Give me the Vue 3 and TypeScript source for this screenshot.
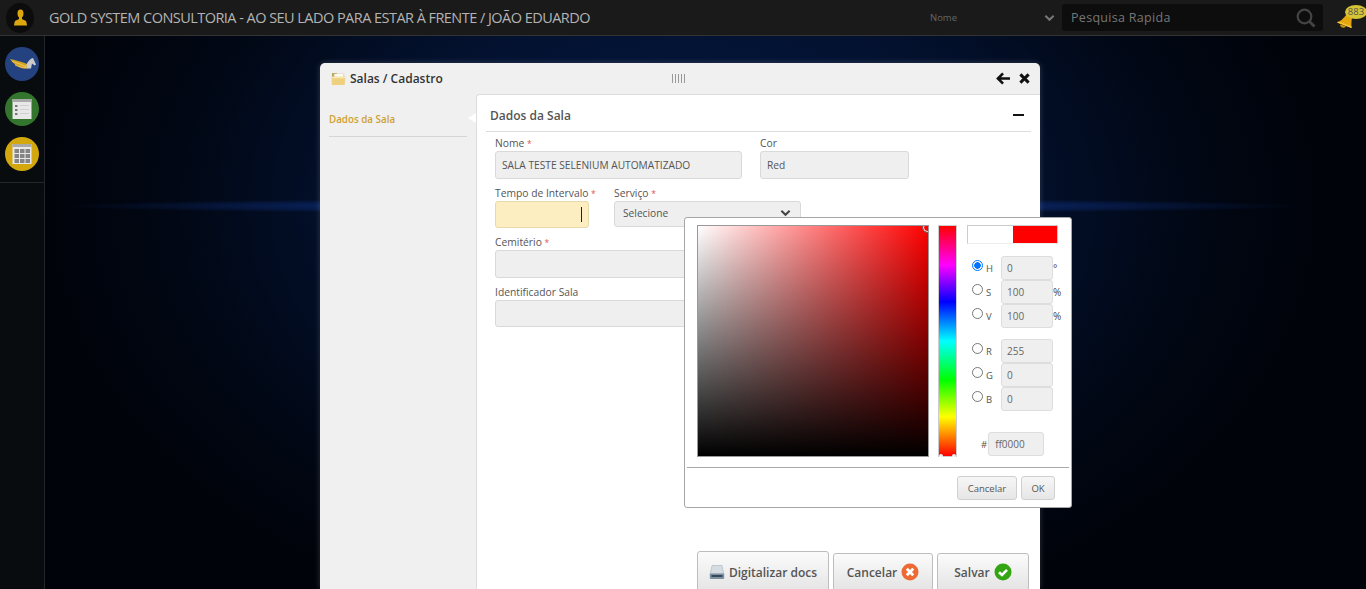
<script setup lang="ts">
interface Field {
  key: string
  value: string
  unit?: string
  checked?: boolean
}

const hsv: Field[] = [
  { key: 'H', value: '0', unit: '°', checked: true },
  { key: 'S', value: '100', unit: '%' },
  { key: 'V', value: '100', unit: '%' },
]

const rgb: Field[] = [
  { key: 'R', value: '255' },
  { key: 'G', value: '0' },
  { key: 'B', value: '0' },
]
</script>

<template>
  <div class="page">
    <header class="topbar">
      <div class="avatar">
        <svg viewBox="0 0 16 18" width="15" height="17">
          <path d="M8 .5C5.800.5 4.800 2.300 4.800 4.600c0 1.900.7 3.400 1.600 4.400v1.600C4.600 11.700 2.400 12 1.800 13.500L1 17.500h14l-.8-4c-.6-1.500-2.800-1.800-4.600-2.900V9c.9-1 1.600-2.500 1.600-4.400C11.200 2.300 10.200.5 8 .5z" fill="#dba70e" />
        </svg>
      </div>
      <div class="brand">GOLD SYSTEM CONSULTORIA - AO SEU LADO PARA ESTAR À FRENTE / JOÃO EDUARDO</div>
      <div class="filter">
        <span>Nome</span>
        <svg viewBox="0 0 12 8" width="11" height="8"><path d="M1.500 1.500 6 6l4.500-4.500" fill="none" stroke="#777" stroke-width="2.200" /></svg>
      </div>
      <div class="search">
        <span>Pesquisa Rapida</span>
        <svg viewBox="0 0 20 20" width="20" height="20"><circle cx="8.500" cy="8.500" r="6.800" fill="none" stroke="#444" stroke-width="2.200" /><path d="M13.500 13.500 18.500 18.500" stroke="#444" stroke-width="2.800" /></svg>
      </div>
      <div class="bell">
        <svg viewBox="0 0 20 20" width="20" height="20">
          <path d="M2 13.500C7 12 10 7 13 4c2-1 4 0 4 2 0 4-1 8-.5 13z" fill="#e4a60c" />
          <path d="M5 15.500c.2 3.500 4.800 4.500 6 1.500z" fill="#c8920a" />
          <path d="M2 13.500 16.500 19l.2-1.600L3.500 12.500z" fill="#f5c83a" />
        </svg>
        <span class="bell-count">883</span>
      </div>
    </header>

    <div class="workspace">
      <nav class="rail">
        <div class="rail-icons">
          <div class="rail-btn blue">
            <svg viewBox="0 0 34 34" width="34" height="34">
              <path d="M5 12c6 1 12 3 17 5l.5 4.500c-7 1-13-3.500-17.500-9.500z" fill="#d6a520" />
              <path d="M7 14.500c4 1 9 3 14 5M10 18c3 1.500 7 2.500 11 2.500" fill="none" stroke="#f0cf6a" stroke-width=".8" />
              <path d="M21.500 18c1-3.500 4-6.500 6.500-7l3 6.500-1.500 1-2.500-2-1 5-4.500 0z" fill="#cbcbcb" />
            </svg>
          </div>
          <div class="rail-btn green">
            <svg viewBox="0 0 34 34" width="34" height="34">
              <rect x="7.500" y="7" width="19" height="20" fill="#e8e8e8" />
              <rect x="7.500" y="7" width="19" height="3" fill="#a9a9a9" />
              <path d="M10 13h2.500v2H10zM10 17h2.500v2H10zM10 21h2.500v2H10z" fill="#777" />
              <path d="M15 13.500h9M15 17.500h9M15 21.500h9" stroke="#cfcfcf" />
            </svg>
          </div>
          <div class="rail-btn gold">
            <svg viewBox="0 0 34 34" width="34" height="34">
              <rect x="7.500" y="7" width="19" height="20" fill="#e8e8e8" />
              <rect x="7.500" y="7" width="19" height="3" fill="#a9a9a9" />
              <path d="M9.500 12h4.500v4h-4.500zM15 12h4.500v4H15zM20.500 12H25v4h-4.500zM9.500 17h4.500v4h-4.500zM15 17h4.500v4H15zM20.500 17H25v4h-4.500zM9.500 22h4.500v4h-4.500zM15 22h4.500v4H15zM20.500 22H25v4h-4.500z" fill="#858585" />
            </svg>
          </div>
        </div>
      </nav>

      <main class="stage">
        <section class="modal">
          <div class="modal-head">
            <div class="modal-title">
              <svg viewBox="0 0 16 14" width="15" height="14">
                <path d="M1 .5h5l1 1h7v4H1z" fill="#bda964" />
                <path d="M3.500 1.500h10v3.500h-10z" fill="#fbfaf3" />
                <path d="M.5 4.500h15L14.500 13.500H1z" fill="#eed07f" />
                <path d="M.5 4.500h15l-.2 1.600H.6z" fill="#f9e8b4" />
              </svg>
              <span>Salas / Cadastro</span>
            </div>
            <div class="barcode"></div>
            <div class="modal-actions">
              <svg viewBox="0 0 16 14" width="15" height="13"><path d="M7.500 1.500 2 7l5.500 5.500M2.500 7H15" fill="none" stroke="#111" stroke-width="2.800" /></svg>
              <svg viewBox="0 0 12 12" width="11" height="11"><path d="M1.500 1.500l9 9M10.500 1.500l-9 9" stroke="#111" stroke-width="3.200" /></svg>
            </div>
          </div>

          <div class="modal-body">
            <aside class="tabs">
              <div class="tab">Dados da Sala</div>
            </aside>
            <div class="panel">
              <span class="panel-notch"></span>
              <div class="panel-head">
                <span>Dados da Sala</span>
                <i class="minus"></i>
              </div>

              <div class="form">
                <div class="row">
                  <label class="field w-nome">
                    <span class="lbl">Nome <b>*</b></span>
                    <span class="input tall">SALA TESTE SELENIUM AUTOMATIZADO</span>
                  </label>
                  <label class="field w-cor">
                    <span class="lbl">Cor</span>
                    <span class="input tall">Red</span>
                  </label>
                </div>
                <div class="row row-time">
                  <label class="field w-tempo">
                    <span class="lbl">Tempo de Intervalo <b>*</b></span>
                    <span class="input focus"><i class="caret"></i></span>
                  </label>
                  <label class="field w-servico">
                    <span class="lbl">Serviço <b>*</b></span>
                    <span class="input select">
                      Selecione
                      <svg viewBox="0 0 12 8" width="11" height="8"><path d="M1.500 1.500 6 6l4.500-4.500" fill="none" stroke="#444" stroke-width="2.200" /></svg>
                    </span>
                  </label>
                </div>
                <label class="field wide">
                  <span class="lbl">Cemitério <b>*</b></span>
                  <span class="input tall"></span>
                </label>
                <label class="field wide">
                  <span class="lbl">Identificador Sala</span>
                  <span class="input"></span>
                </label>
              </div>

              <div class="footer">
                <button class="btn big">
                  <svg viewBox="0 0 16 16" width="16" height="16">
                    <path d="M3 1.500h10l1.800 8.500H1.200z" fill="#d5dce2" stroke="#aab4bd" stroke-width=".6" />
                    <rect x=".8" y="9.500" width="14.400" height="5.500" rx="1" fill="#7f90a1" />
                    <rect x="2.500" y="11.200" width="11" height="1.600" fill="#24364a" />
                  </svg>
                  Digitalizar docs
                </button>
                <button class="btn">
                  Cancelar
                  <svg viewBox="0 0 18 18" width="18" height="18">
                    <circle cx="9" cy="9" r="8.500" fill="#ee6a35" />
                    <path d="M5.800 5.800l6.400 6.400M12.200 5.800l-6.400 6.400" stroke="#fff" stroke-width="2.800" />
                  </svg>
                </button>
                <button class="btn">
                  Salvar
                  <svg viewBox="0 0 18 18" width="18" height="18">
                    <circle cx="9" cy="9" r="8.500" fill="#34a512" />
                    <path d="M5 9.200l3 2.800 5-5.200" fill="none" stroke="#fff" stroke-width="2.600" />
                  </svg>
                </button>
              </div>
            </div>
          </div>
        </section>

        <!-- seletor de cor aberto por cima do formulario -->
        <div class="picker">
          <div class="picker-main">
            <div class="sv-box"><i class="sv-handle"></i></div>
            <div class="hue"><i></i><i></i></div>
            <div class="picker-side">
              <div class="swatch"><i></i><i></i></div>
              <div class="group">
                <div v-for="f in hsv" :key="f.key" class="line">
                  <span class="radio" :class="{ on: f.checked }"></span>
                  <span class="key">{{ f.key }}</span>
                  <span class="num">{{ f.value }}</span>
                  <span class="unit">{{ f.unit }}</span>
                </div>
              </div>
              <div class="group">
                <div v-for="f in rgb" :key="f.key" class="line">
                  <span class="radio"></span>
                  <span class="key">{{ f.key }}</span>
                  <span class="num">{{ f.value }}</span>
                </div>
              </div>
              <div class="hex">
                <span>#</span>
                <span class="hex-val">ff0000</span>
              </div>
            </div>
          </div>
          <div class="picker-foot">
            <button class="pbtn">Cancelar</button>
            <button class="pbtn">OK</button>
          </div>
        </div>
      </main>
    </div>
  </div>
</template>

<style>
html, body {
  margin: 0;
  background: #000;
}
</style>

<style scoped>
.page {
  width: 1366px;
  height: 589px;
  overflow: hidden;
  display: flex;
  flex-direction: column;
  font-family: "Open Sans", "Noto Sans", sans-serif;
  background:
    radial-gradient(ellipse 620px 8px at 683px 206px, #0c2a70 0%, rgba(12, 42, 112, 0.75) 50%, transparent 100%),
    radial-gradient(ellipse 640px 440px at 683px 206px, #051a45 0%, #03112e 50%, #010714 80%, #00030a 100%);
}

.topbar {
  height: 35px;
  flex: none;
  display: flex;
  align-items: center;
  background: #1a1a1a;
  border-bottom: 1px solid #333;
}

.avatar {
  width: 28px;
  height: 30px;
  margin-left: 6px;
  border-radius: 50%;
  background: #0c0c0c;
  display: flex;
  align-items: center;
  justify-content: center;
}

.brand {
  margin-left: 15px;
  width: 881px;
  color: #b4b4b4;
  font-size: 14.500px;
  letter-spacing: -0.54px;
  white-space: nowrap;
}

.filter {
  width: 132px;
  display: flex;
  justify-content: space-between;
  align-items: center;
  color: #666;
  font-size: 9.500px;
  padding-right: 7px;
  box-sizing: border-box;
}

.search {
  width: 261px;
  height: 27px;
  border-radius: 3px;
  background: #0d0d0d;
  display: flex;
  align-items: center;
  justify-content: space-between;
  padding: 0 7px 0 9px;
  box-sizing: border-box;
  color: #777;
  font-size: 12.500px;
  letter-spacing: 0.3px;
}

.bell {
  position: relative;
  margin-left: 14px;
  width: 29px;
  height: 26px;
}

.bell svg {
  position: absolute;
  left: -2px;
  top: 4px;
}

.bell-count {
  position: absolute;
  left: 8px;
  top: 0;
  width: 22px;
  height: 14px;
  line-height: 14px;
  border-radius: 50%;
  background: #d6c434;
  color: #555;
  font-size: 9.500px;
  text-align: center;
}

.workspace {
  flex: 1;
  display: flex;
  min-height: 0;
}

.rail {
  width: 44px;
  flex: none;
  background: #090c0f;
  border-right: 1px solid #23262a;
}

.rail-icons {
  padding: 11px 0 11px 5px;
  display: flex;
  flex-direction: column;
  gap: 11px;
  border-bottom: 1px solid #23262a;
}

.rail-btn {
  width: 34px;
  height: 34px;
  border-radius: 50%;
}

.rail-btn.blue { background: #23427f; }
.rail-btn.green { background: #33752c; }
.rail-btn.gold { background: #d3a80f; }

.stage {
  position: relative;
  flex: 1;
  min-width: 0;
  padding: 27px 0 0 275px;
}

.modal {
  width: 720px;
  height: 526px;
  border-radius: 5px 5px 0 0;
  background: #f0f0f0;
  box-shadow: 0 0 6px rgba(255, 255, 255, 0.18);
  display: flex;
  flex-direction: column;
}

.modal-head {
  height: 31px;
  flex: none;
  display: flex;
  align-items: center;
  padding: 0 10px 0 11px;
}

.modal-title {
  width: 341px;
  display: flex;
  align-items: center;
  gap: 4px;
  color: #333;
  font-size: 12px;
  font-weight: 600;
}

.barcode {
  width: 15px;
  height: 9px;
  background: repeating-linear-gradient(90deg, #999 0 1px, transparent 1px 3px);
}

.modal-actions {
  margin-left: auto;
  display: flex;
  align-items: center;
  gap: 8px;
}

.modal-body {
  flex: 1;
  display: flex;
  min-height: 0;
}

.tabs {
  width: 156px;
  flex: none;
  padding: 19px 9px 0;
  box-sizing: border-box;
}

.tab {
  color: #cfa12f;
  font-size: 9.800px;
  font-weight: 600;
  padding-bottom: 10px;
  border-bottom: 1px solid #d6d6d6;
  width: 138px;
}

.panel {
  position: relative;
  flex: 1;
  display: flex;
  flex-direction: column;
  padding: 0 9px;
  background: #fff;
  border: 1px solid #ddd;
  border-bottom: 0;
  border-right: 0;
  border-radius: 4px 0 0 0;
}

.panel-notch {
  position: absolute;
  left: -9px;
  top: 18px;
  border-style: solid;
  border-width: 5px 8px 5px 0;
  border-color: transparent #fff transparent transparent;
}

.panel-head {
  height: 37px;
  flex: none;
  box-sizing: border-box;
  display: flex;
  align-items: center;
  justify-content: space-between;
  padding: 5px 7px 0 4px;
  border-bottom: 1px solid #ddd;
  color: #555;
  font-size: 12px;
  font-weight: 600;
}

.minus {
  width: 11px;
  height: 2px;
  background: #111;
  margin-top: -2px;
}

.form {
  display: flex;
  flex-direction: column;
  gap: 8px;
  padding: 5px 9px 0;
  flex: 1;
}

.row {
  display: flex;
  gap: 18px;
}

.row-time {
  gap: 25px;
}

.field {
  display: flex;
  flex-direction: column;
}

.w-nome { width: 247px; }
.w-cor { width: 149px; }
.w-tempo { width: 94px; }
.w-servico { width: 187px; }
.wide { width: 517px; }

.lbl {
  height: 13px;
  line-height: 12px;
  margin-bottom: 1px;
  color: #555;
  font-size: 10.300px;
  white-space: nowrap;
}

.lbl b {
  color: #d55;
  font-weight: 400;
  font-size: 8.500px;
}

.input {
  height: 27px;
  display: flex;
  align-items: center;
  padding: 0 6px;
  box-sizing: border-box;
  background: #efefef;
  border: 1px solid #d9d9d9;
  border-radius: 3px;
  color: #555;
  font-size: 10.200px;
}

.input.tall {
  height: 28px;
}

.focus {
  background: #fdeec2;
  border-color: #e8d9ad;
  justify-content: flex-end;
  padding-right: 6px;
}

.caret {
  width: 1px;
  height: 15px;
  background: #222;
}

.select {
  height: 26px;
  justify-content: space-between;
  padding: 0 9px 2px 8px;
}

.footer {
  flex: none;
  display: flex;
  justify-content: flex-end;
  align-items: flex-start;
  gap: 4px;
  padding-right: 2px;
  height: 38px;
}

.btn {
  height: 38px;
  width: 100px;
  margin-top: 2px;
  padding: 0;
  display: flex;
  align-items: center;
  justify-content: center;
  gap: 4px;
  border: 1px solid #bdbdbd;
  border-radius: 3px;
  background: linear-gradient(#fbfbfb, #e4e4e4);
  color: #555;
  font-family: inherit;
  font-size: 12px;
  font-weight: 600;
}

.btn:last-child {
  width: 92px;
}

.btn.big {
  width: 132px;
  height: 42px;
  margin-top: 0;
}

.picker {
  position: absolute;
  left: 639px;
  top: 181px;
  width: 388px;
  height: 291px;
  box-sizing: border-box;
  background: #fff;
  border: 1px solid #a6a6a6;
  border-radius: 3px;
  padding: 7px 2px 0;
  display: flex;
  flex-direction: column;
}

.picker-main {
  display: flex;
  padding-left: 10px;
  height: 242px;
  flex: none;
}

.sv-box {
  position: relative;
  flex: none;
  width: 230px;
  height: 230px;
  overflow: hidden;
  border: 1px solid #999;
  background:
    linear-gradient(transparent, #000),
    linear-gradient(90deg, #fff, #f00);
}

.sv-handle {
  position: absolute;
  right: -4px;
  top: -3px;
  width: 7px;
  height: 7px;
  border: 1px solid #fff;
  outline: 1px solid #666;
  border-radius: 50%;
}

.hue {
  position: relative;
  flex: none;
  width: 17px;
  height: 230px;
  margin-left: 9px;
  border: 1px solid #ccc;
  background: linear-gradient(#f00, #f0f 17%, #00f 33%, #0ff 50%, #0f0 67%, #ff0 83%, #f00);
}

.hue i {
  position: absolute;
  bottom: -1px;
  left: 0;
  width: 4px;
  height: 3px;
  background: #eee;
  border-radius: 2px 2px 0 0;
}

.hue i + i {
  left: auto;
  right: 0;
}

.picker-side {
  width: 100px;
  flex: none;
  margin-left: 10px;
}

.swatch {
  display: flex;
  width: 89px;
  height: 17px;
  border: 1px solid #ccc;
  border-bottom-color: #eee;
}

.swatch i {
  flex: 1;
}

.swatch i + i {
  background: #f00;
}

.group {
  margin-top: 12px;
  padding-left: 5px;
}

.group + .group {
  margin-top: 11px;
}

.line {
  height: 24px;
  display: flex;
  align-items: center;
  color: #555;
  font-size: 9.500px;
}

.radio {
  flex: none;
  width: 9px;
  height: 9px;
  border: 1px solid #777;
  border-radius: 50%;
  margin-top: -6px;
  margin-right: 3px;
  background: #fff;
}

.radio.on {
  border-color: #0075ff;
  background: radial-gradient(circle, #0075ff 0 3px, #fff 3.500px);
}

.key {
  flex: none;
  width: 15px;
}

.num {
  flex: none;
  width: 52px;
  height: 24px;
  box-sizing: border-box;
  display: flex;
  align-items: center;
  padding-left: 5px;
  background: #efefef;
  border: 1px solid #ddd;
  border-radius: 3px;
  color: #666;
  font-size: 10px;
}

.unit {
  padding-left: 0;
  font-size: 10px;
  color: #444;
}

.hex {
  margin-top: 21px;
  padding-left: 14px;
  display: flex;
  align-items: center;
  gap: 1px;
  color: #555;
  font-size: 9.500px;
}

.hex-val {
  width: 56px;
  height: 24px;
  box-sizing: border-box;
  display: flex;
  align-items: center;
  padding-left: 6px;
  background: #efefef;
  border: 1px solid #ddd;
  border-radius: 3px;
  color: #666;
  font-size: 10px;
}

.picker-foot {
  flex: 1;
  display: flex;
  justify-content: flex-end;
  align-items: flex-start;
  gap: 4px;
  padding: 8px 14px 0 0;
  border-top: 1px solid #aaa;
}

.pbtn {
  height: 24px;
  width: 60px;
  padding: 0;
  border: 1px solid #d0d0d0;
  border-radius: 3px;
  background: linear-gradient(#f6f6f6, #e6e6e6);
  color: #555;
  font-family: inherit;
  font-size: 9.500px;
}

.pbtn:last-child {
  width: 34px;
}
</style>
